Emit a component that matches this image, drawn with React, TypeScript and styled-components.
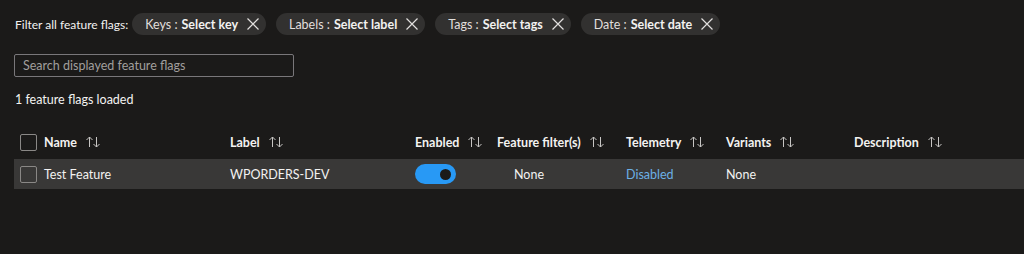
import React from "react";
import styled, { createGlobalStyle } from "styled-components";

const Global = createGlobalStyle`
  html, body { margin: 0; padding: 0; background: #1b1a19; }
  body { font-family: "Lato", "Open Sans", sans-serif; color: #f3f2f1; }
  * { box-sizing: border-box; }
`;

const Page = styled.div`
  width: 1024px;
  height: 254px;
  background: #1b1a19;
  padding: 13px 0 0 14px;
  display: flex;
  flex-direction: column;
`;

const FilterBar = styled.div`
  display: flex;
  align-items: center;
  gap: 10px;
  height: 22px;
`;

const FilterTitle = styled.span`
  font-size: 12px;
  padding-left: 1px;
  margin-right: -6px;
  color: #f3f2f1;
`;

const Pill = styled.div`
  display: flex;
  align-items: center;
  height: 22px;
  border-radius: 11px;
  background: #323130;
  padding: 0 6px 0 13px;
  font-size: 12.5px;
  color: #e1dfdd;
  white-space: nowrap;
`;

const PillValue = styled.b`
  font-weight: 700;
  color: #f3f2f1;
  margin-left: 4px;
`;

const CloseBtn = styled.span`
  display: inline-flex;
  width: 14px;
  height: 14px;
  margin-left: 8px;
`;

const Search = styled.input`
  margin-top: 19px;
  width: 280px;
  height: 23px;
  border: 1px solid #79777a;
  border-radius: 2px;
  background: transparent;
  color: #f3f2f1;
  padding: 0 8px;
  font-family: "Lato", sans-serif;
  font-size: 12.5px;
  outline: none;
  &::placeholder { color: #a19f9d; }
`;

const Loaded = styled.div`
  margin-top: 15px;
  padding-left: 1px;
  font-size: 12.5px;
  line-height: 16px;
`;

const cols = "30px 186px 185px 82px 129px 100px 128px 1fr";

const HeaderRow = styled.div`
  margin-top: 21px;
  display: grid;
  grid-template-columns: ${cols};
  height: 26px;
  align-items: center;
`;

const DataRow = styled.div`
  margin-top: 4px;
  display: grid;
  grid-template-columns: ${cols};
  height: 30px;
  align-items: center;
  background: #393837;
`;

const HeadCell = styled.div`
  display: flex;
  align-items: center;
  gap: 8px;
  font-size: 12.5px;
  font-weight: 700;
  color: #f3f2f1;
`;

const Cell = styled.div<{ $indent?: number; $link?: boolean }>`
  font-size: 12.5px;
  color: ${(p) => (p.$link ? "#6cb0e6" : "#f3f2f1")};
  padding-left: ${(p) => p.$indent ?? 0}px;
  display: flex;
  align-items: center;
`;

const Check = styled.div`
  width: 17px;
  height: 17px;
  margin-left: 6px;
  border: 1px solid #8a8886;
  border-radius: 2px;
`;

const Toggle = styled.div`
  width: 41px;
  height: 20px;
  border-radius: 10px;
  background: #2899f5;
  display: flex;
  align-items: center;
  justify-content: flex-end;
  padding-right: 5px;
`;

const Knob = styled.div`
  width: 11px;
  height: 11px;
  border-radius: 50%;
  background: #1b1a19;
`;

const XIcon = () => (
  <svg width="14" height="14" viewBox="0 0 14 14">
    <path d="M1.5 1.5 L12.5 12.5 M12.5 1.5 L1.5 12.5" stroke="#e1dfdd" strokeWidth="1.2" fill="none" />
  </svg>
);

const SortIcon = () => (
  <svg width="16" height="14" viewBox="0 0 16 14">
    <path d="M4.5 12 V2 M1.5 5 L4.5 2 L7.5 5" stroke="#c8c6c4" strokeWidth="1" fill="none" />
    <path d="M11.5 2 V12 M8.5 9 L11.5 12 L14.5 9" stroke="#c8c6c4" strokeWidth="1" fill="none" />
  </svg>
);

const filters = [
  ["Keys", "Select key"],
  ["Labels", "Select label"],
  ["Tags", "Select tags"],
  ["Date", "Select date"],
];

const headers = ["Name", "Label", "Enabled", "Feature filter(s)", "Telemetry", "Variants", "Description"];

export default function App() {
  return (
    <>
      <Global />
      <Page>
        <FilterBar>
          <FilterTitle>Filter all feature flags:</FilterTitle>
          {filters.map(([k, v]) => (
            <Pill key={k}>
              {k} :<PillValue>{v}</PillValue>
              <CloseBtn>
                <XIcon />
              </CloseBtn>
            </Pill>
          ))}
        </FilterBar>
        <Search placeholder="Search displayed feature flags" />
        <Loaded>1 feature flags loaded</Loaded>
        <HeaderRow>
          <Check />
          {headers.map((h) => (
            <HeadCell key={h}>
              {h}
              <SortIcon />
            </HeadCell>
          ))}
        </HeaderRow>
        <DataRow>
          <Check />
          <Cell>Test Feature</Cell>
          <Cell>WPORDERS-DEV</Cell>
          <Cell>
            <Toggle>
              <Knob />
            </Toggle>
          </Cell>
          <Cell $indent={17}>None</Cell>
          <Cell $link>Disabled</Cell>
          <Cell>None</Cell>
          <Cell />
        </DataRow>
      </Page>
    </>
  );
}
